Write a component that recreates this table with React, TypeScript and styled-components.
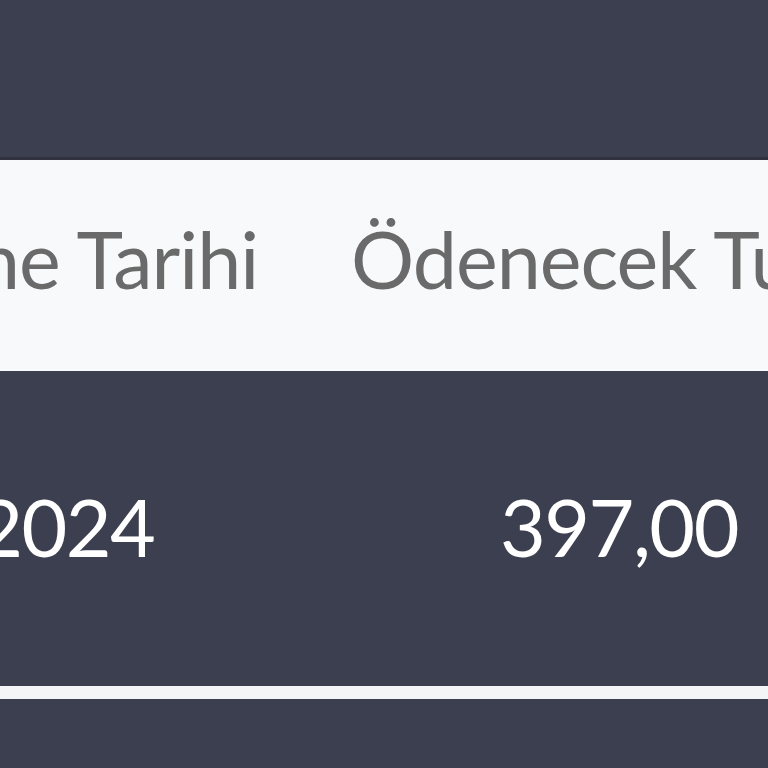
import React from "react";
import styled, { createGlobalStyle } from "styled-components";

const Global = createGlobalStyle`
  html, body { margin: 0; padding: 0; background: #3c3f50; }
  body { font-family: Lato, "Open Sans", sans-serif; }
`;

const Frame = styled.div`
  width: 768px;
  height: 768px;
  overflow: hidden;
  background: #3c3f50;
  padding-top: 157px;
  box-sizing: border-box;
`;

const Table = styled.div`
  margin-left: -380px;
  width: 1318px;
  display: grid;
  grid-template-columns: 680px 638px;
`;

const HeadCell = styled.div`
  background: #f8f9fa;
  border-top: 3px solid #30323f;
  height: 214px;
  box-sizing: border-box;
  display: flex;
  align-items: center;
  justify-content: center;
  padding: 0 0 14px;
  font-size: 79px;
  letter-spacing: -1px;
  color: #6a6a6a;
  white-space: nowrap;
`;

const BodyCell = styled.div`
  height: 328px;
  box-sizing: border-box;
  display: flex;
  align-items: center;
  justify-content: center;
  padding: 0 0 4px;
  font-size: 79px;
  letter-spacing: -1.5px;
  color: #ffffff;
  white-space: nowrap;
  border-bottom: 13px solid #f4f5f7;
`;

const Text = styled.span``;

export default function App() {
  return (
    <>
      <Global />
      <Frame>
        <Table>
          <HeadCell><Text>Son Ödeme Tarihi</Text></HeadCell>
          <HeadCell><Text>Ödenecek Tutar</Text></HeadCell>
          <BodyCell><Text>01.01.2024</Text></BodyCell>
          <BodyCell><Text>397,00</Text></BodyCell>
        </Table>
      </Frame>
    </>
  );
}
